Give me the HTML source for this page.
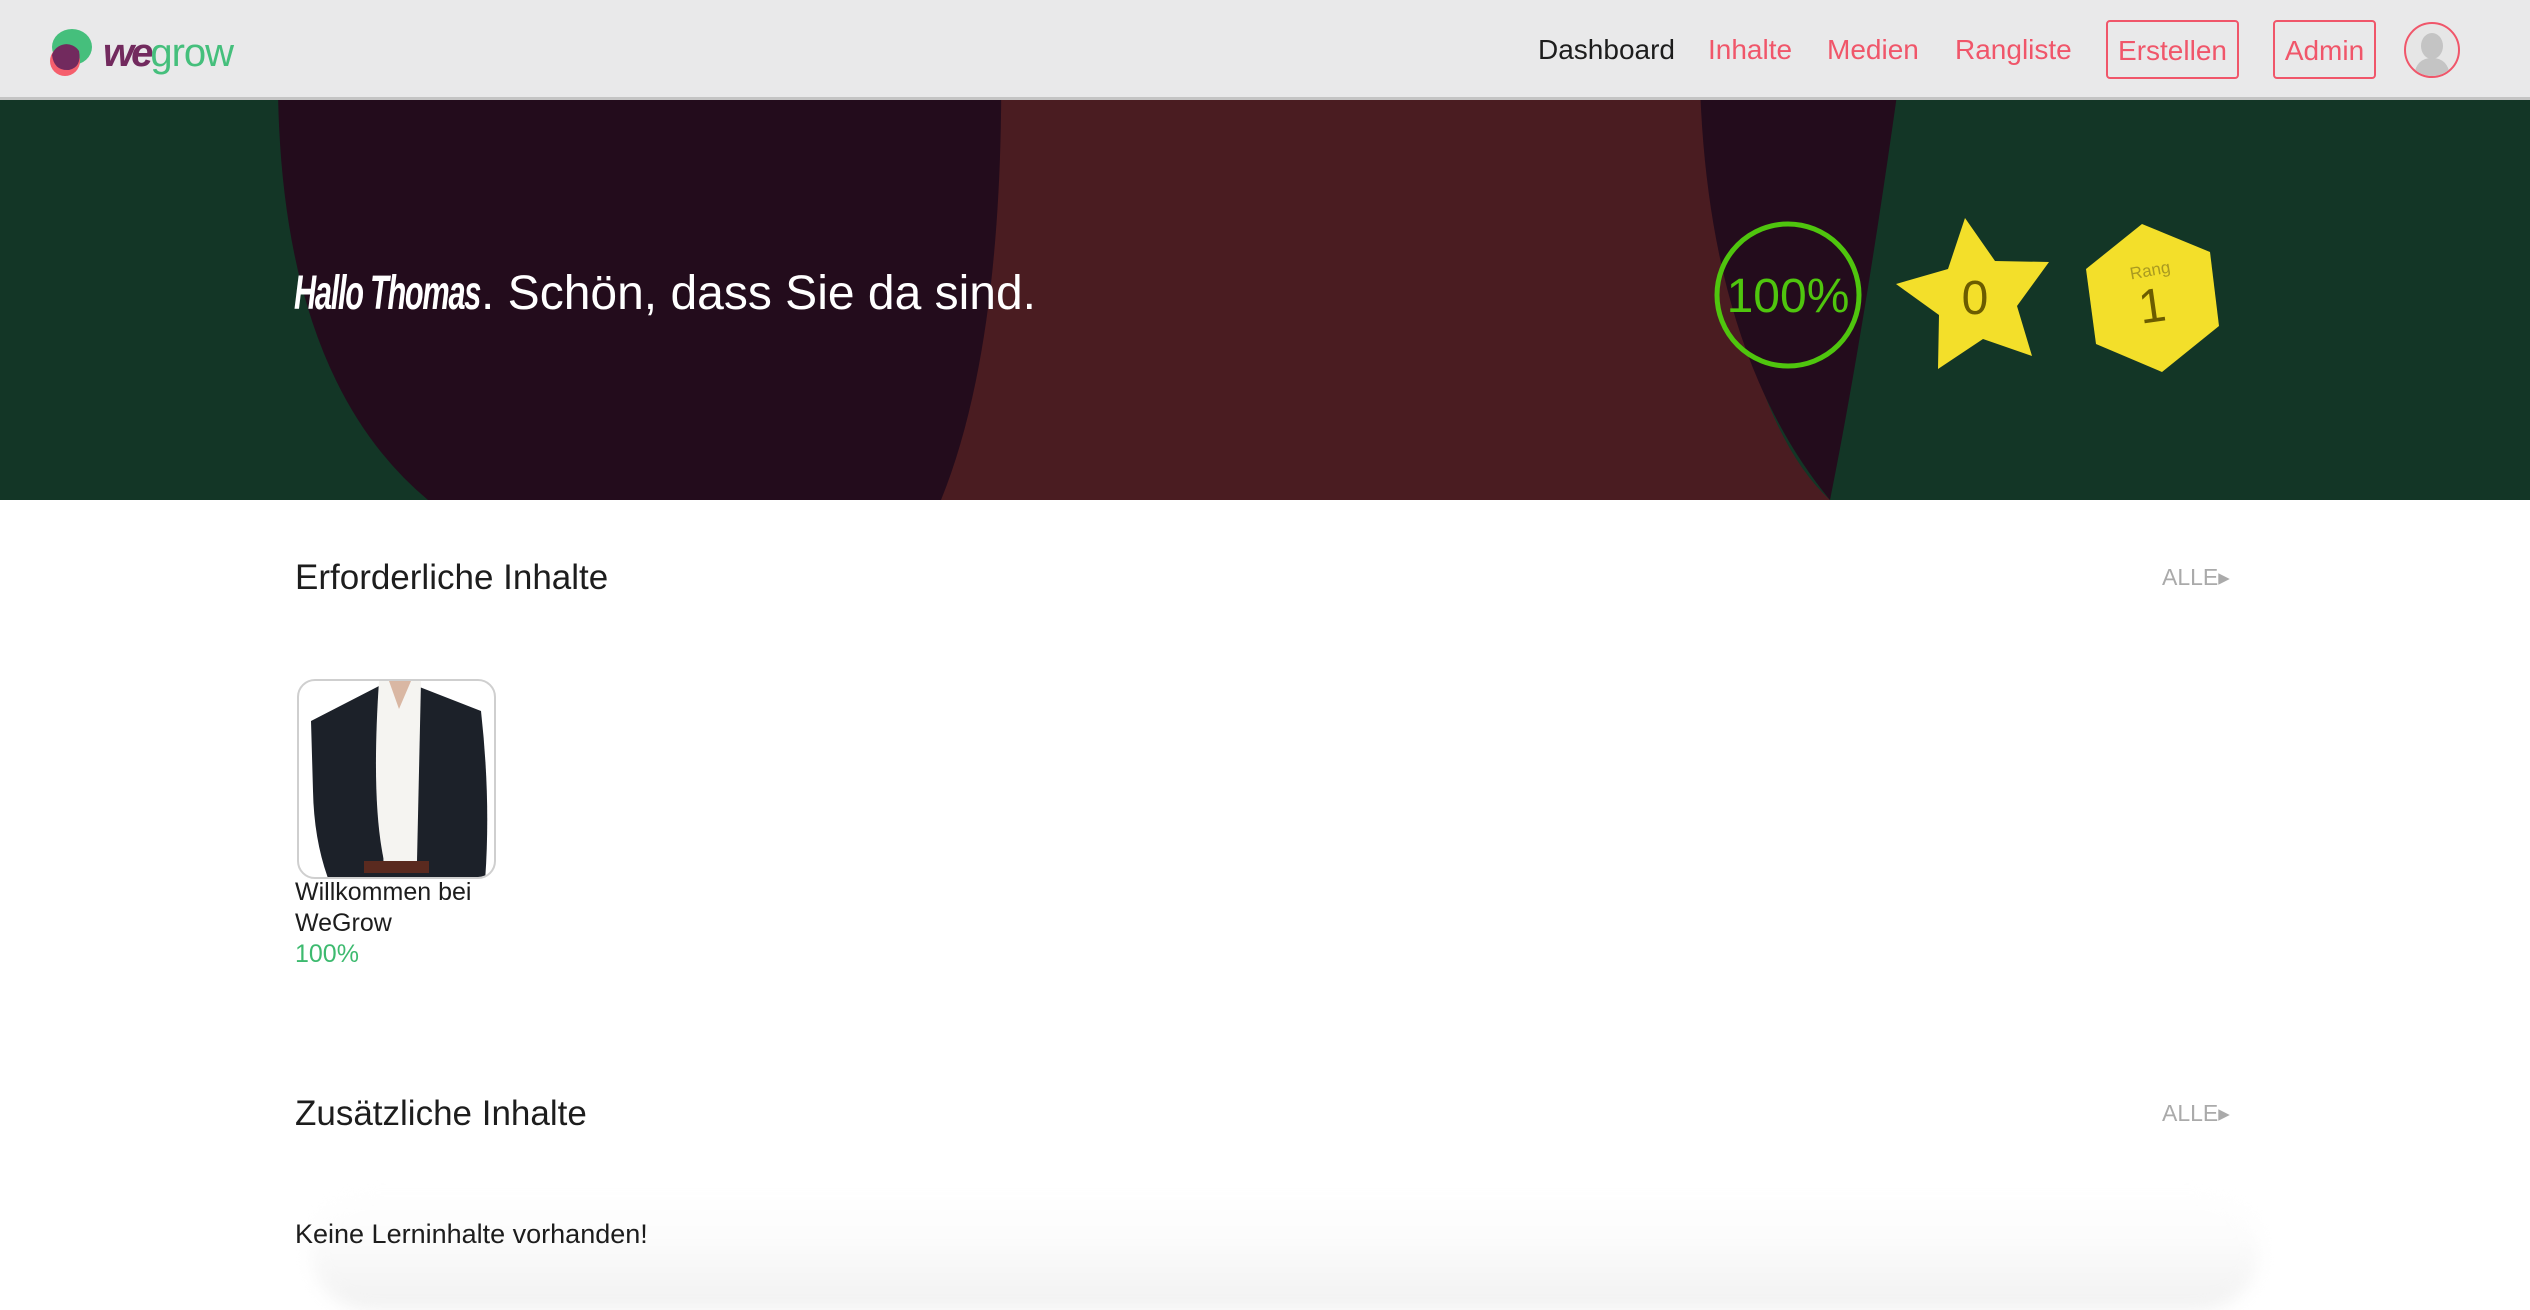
<!DOCTYPE html>
<html><head><meta charset="utf-8"><style>
*{margin:0;padding:0;box-sizing:border-box}
body{width:2530px;height:1270px;overflow:hidden;background:#fff;font-family:"Liberation Sans",Arial,sans-serif;position:relative}
.abs{position:absolute}
#hdr{left:0;top:0;width:2530px;height:100px;background:#e9e9ea;border-bottom:3px solid #c4c4c4}
.nav{top:34px;font-size:28px;color:#f0566a;white-space:nowrap}
.box{top:20px;height:59px;border:2px solid #f0566a;border-radius:4px;font-size:28px;color:#f0566a;text-align:center;line-height:57px}
h2{position:absolute;font-weight:normal;font-size:35px;color:#1d1d1d}
.alle{position:absolute;font-size:23px;color:#aaa;left:2162px}
</style></head><body>
<svg class="abs" style="left:0;top:0" width="2530" height="500">
<rect width="2530" height="500" fill="#133626"/>
<path d="M900,0 L1700,0 Q1720,400 1830,500 L900,500 Z" fill="#4a1c21"/>
<path d="M280,0 Q260,360 428,500 L941,500 Q1010,330 1000,0 Z" fill="#230c1c"/>
<path d="M1700,0 Q1690,330 1830,500 Q1870,300 1910,0 Z" fill="#230c1c"/>
</svg>
<div id="hdr" class="abs">
  <svg class="abs" style="left:46px;top:26px" width="50" height="55">
    <ellipse cx="26" cy="21" rx="20" ry="18" fill="#45bf7c"/>
    <circle cx="19" cy="35" r="15" fill="#f55f6d"/>
    <path d="M6,29 A15,15 0 0 1 33,25 Q36,41 23,44 Q8,45 6,29Z" fill="#722a5e"/>
  </svg>
  <div class="abs" style="left:103px;top:30px;font-size:40px;line-height:46px;letter-spacing:-1px"><span style="color:#722a5e;font-style:italic;font-weight:bold;letter-spacing:-3px">we</span><span style="color:#45bf7c">grow</span></div>
  <div class="abs nav" style="left:1538px;color:#1d1d1d">Dashboard</div>
  <div class="abs nav" style="left:1708px">Inhalte</div>
  <div class="abs nav" style="left:1827px">Medien</div>
  <div class="abs nav" style="left:1955px">Rangliste</div>
  <div class="abs box" style="left:2106px;width:133px">Erstellen</div>
  <div class="abs box" style="left:2273px;width:103px">Admin</div>
  <div class="abs" style="left:2404px;top:22px;width:56px;height:56px;border:2px solid #f0566a;border-radius:50%;background:#e6e6e6;overflow:hidden">
    <svg width="52" height="52"><ellipse cx="26" cy="22" rx="11" ry="13" fill="#c4c4c4"/><path d="M8,52 Q10,34 26,34 Q42,34 44,52Z" fill="#c4c4c4"/></svg>
  </div>
</div>
<div class="abs" style="left:294px;top:266px;font-size:48px;color:#fff;white-space:nowrap;height:60px;width:190px;overflow:visible"><span style="position:absolute;left:0;top:0;font-style:italic;font-weight:bold;transform:scaleX(0.64);transform-origin:left;letter-spacing:-2px">Hallo Thomas</span></div>
<div class="abs" style="left:481px;top:266px;font-size:48px;color:#fff;white-space:nowrap">. Schön, dass Sie da sind.</div>
<svg class="abs" style="left:1700px;top:200px" width="600" height="190">
  <circle cx="88" cy="95" r="71" fill="none" stroke="#4fc50e" stroke-width="5"/>
  <text x="88" y="112" font-family="Liberation Sans" font-size="48" fill="#4fc50e" text-anchor="middle">100%</text>
  <polygon points="265,18 295,61 349,62 317,106 332,156 283,139 238,169 239,115 196,84 248,69" fill="#f3df2a"/>
  <text x="275" y="114" font-family="Liberation Sans" font-size="48" fill="#6b5c00" text-anchor="middle">0</text>
  <polygon points="442,24 510,52 519,126 462,172 396,144 386,69" fill="#f3df2a"/>
  <text x="450" y="76" font-family="Liberation Sans" font-size="17" fill="#a99a20" text-anchor="middle" transform="rotate(-10 450 70)">Rang</text>
  <text x="452" y="122" font-family="Liberation Sans" font-size="48" fill="#6b5c00" text-anchor="middle" transform="rotate(-8 452 105)">1</text>
</svg>
<h2 style="left:295px;top:558px">Erforderliche Inhalte</h2>
<div class="alle" style="top:564px">ALLE&#9656;</div>
<div class="abs" style="left:297px;top:679px;width:199px;height:200px;border:2px solid #cfcfcf;border-radius:18px;overflow:hidden;background:#fff">
  <svg width="199" height="200">
    <path d="M12,40 L80,5 L85,200 L30,200 Q15,160 14,110Z" fill="#1c2129"/>
    <path d="M118,5 L182,30 Q192,120 186,200 L115,200Z" fill="#1c2129"/>
    <path d="M80,0 L122,0 L118,180 L85,180 Q72,120 80,0Z" fill="#f5f4f1"/>
    <path d="M90,0 L112,0 L100,28Z" fill="#d9b7a3"/>
    <rect x="65" y="180" width="65" height="12" fill="#5a2a1f"/>
    <rect x="60" y="192" width="75" height="8" fill="#1c2129"/>
  </svg>
</div>
<div class="abs" style="left:295px;top:877px;font-size:25px;line-height:31px;color:#1d1d1d">Willkommen bei<br>WeGrow<br><span style="color:#3dba6f">100%</span></div>
<h2 style="left:295px;top:1094px">Zusätzliche Inhalte</h2>
<div class="alle" style="top:1100px">ALLE&#9656;</div>
<div class="abs" style="left:310px;top:1190px;width:1950px;height:120px;border-radius:60px;background:linear-gradient(#fff,#fcfcfc 40%,#f1f1f1);filter:blur(8px)"></div>
<div class="abs" style="left:295px;top:1219px;font-size:27px;color:#1d1d1d">Keine Lerninhalte vorhanden!</div>
</body></html>
